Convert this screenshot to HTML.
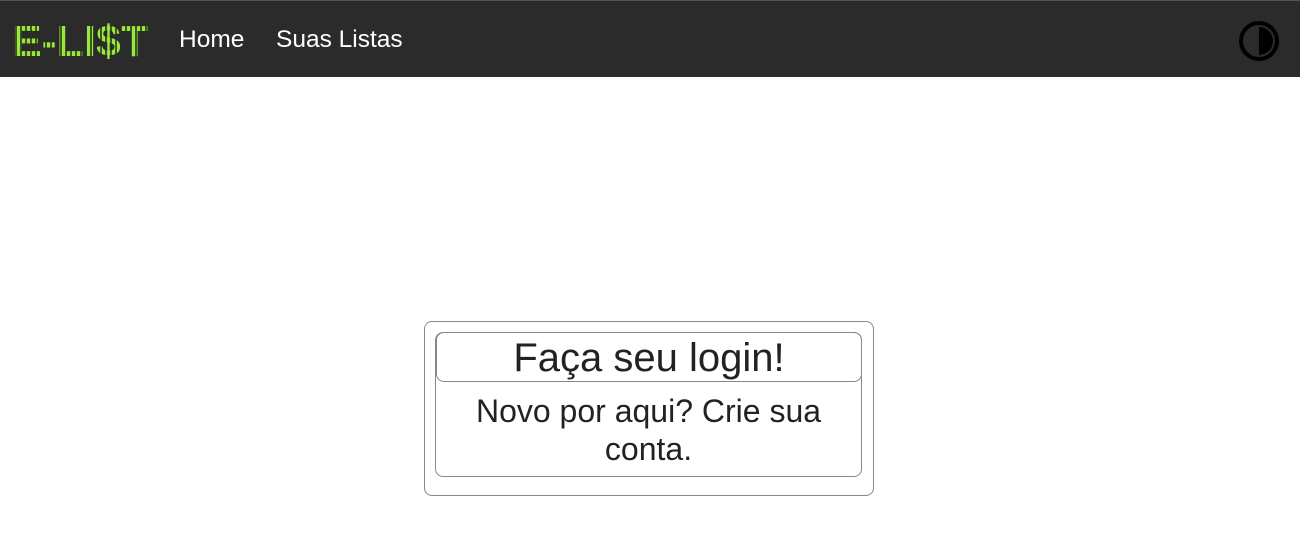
<!DOCTYPE html>
<html><head><style>
body{margin:0;width:1300px;height:556px;background:#fff;font-family:"Liberation Sans",sans-serif;overflow:hidden;position:relative}
.nav{position:absolute;left:0;top:0;width:1300px;height:77px;background:#2b2b2b;border-top:1px solid #555;box-sizing:border-box}
.nav a{position:absolute;top:25px;color:#fff;font-size:24.5px;text-decoration:none}
.outer{position:absolute;left:424px;top:321px;width:448px;height:173px;border:1px solid #888;border-radius:8px}
.inner{position:absolute;left:10px;top:10px;width:425px;height:143px;border:1px solid #888;border-radius:8px}
.head{position:absolute;left:0;top:-1px;height:50px;border:1px solid #888;border-radius:8px;box-sizing:border-box;text-align:center;font-size:40px;line-height:50px;color:#222;width:426px}
.body{position:absolute;left:0;top:59px;width:425px;text-align:center;font-size:32px;line-height:38px;color:#222}
</style></head><body>
<div class="nav">
<svg style="position:absolute;left:12px;top:18px" width="140" height="44">
<defs><linearGradient id="p" x1="0" y1="0" x2="5" y2="0" gradientUnits="userSpaceOnUse" spreadMethod="repeat"><stop offset="0" stop-color="#9be83c"/><stop offset="0.6" stop-color="#9be83c"/><stop offset="0.6" stop-color="#3d5a1c"/><stop offset="1" stop-color="#3d5a1c"/></linearGradient></defs>
<text x="0" y="37" font-family="Liberation Sans" font-weight="bold" font-size="44" fill="url(#p)" textLength="136" lengthAdjust="spacingAndGlyphs">E-LI$T</text>
</svg>
<a style="left:179px">Home</a><a style="left:276px">Suas Listas</a>
<svg style="position:absolute;left:1238px;top:19px" width="42" height="42" viewBox="0 0 42 42"><circle cx="21" cy="21" r="18" fill="none" stroke="#000" stroke-width="4"/><path d="M21 7 A14 14 0 0 1 21 35 Z" fill="#000"/></svg>
</div>
<div class="outer"><div class="inner"><div class="head">Faça seu login!</div><div class="body">Novo por aqui? Crie sua<br>conta.</div></div></div>
</body></html>
